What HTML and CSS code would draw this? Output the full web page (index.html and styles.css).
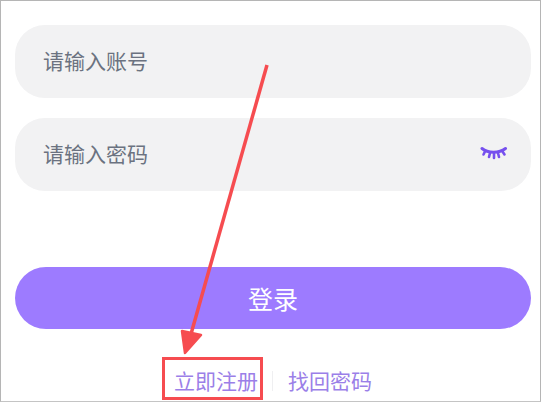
FILE: index.html
```html
<!DOCTYPE html>
<html lang="zh-CN">
<head>
  <meta charset="UTF-8">
  <meta name="viewport" content="width=device-width, initial-scale=1.0">
  <title>登录</title>
  <link rel="stylesheet" href="styles.css">
</head>
<body>
  <div class="page">
    <div class="field">请输入账号</div>
    <div class="field field-password">
      <span>请输入密码</span>
      <svg class="eye" width="28" height="14" viewBox="0 0 28 14">
        <path d="M2 2.500C8 7.500 19 7.500 25.500 2.500" fill="none" stroke="#7650ee" stroke-width="3" stroke-linecap="round"/>
        <path d="M5 5.500L3.500 8.500M10 7L9 11M14 7.500V12M18 7L19 11M22.500 5.500L24.500 8.500" fill="none" stroke="#7650ee" stroke-width="2.600" stroke-linecap="round"/>
      </svg>
    </div>
    <button class="btn-login">登录</button>
    <div class="links">
      <a class="link link-signup">立即注册</a>
      <span class="divider"></span>
      <a class="link">找回密码</a>
    </div>

    <!-- red annotation on top of the page -->
    <svg class="arrow" width="541" height="402" viewBox="0 0 541 402">
      <line x1="267" y1="65" x2="191" y2="334" stroke="#f64c50" stroke-width="3.500"/>
      <polygon points="185,353 182,331 201,335" fill="#f64c50" stroke="#f64c50" stroke-width="2.500" stroke-linejoin="round"/>
    </svg>
    <div class="mark"></div>
  </div>
</body>
</html>
```

FILE: styles.css
```css
* {
  margin: 0;
  padding: 0;
  box-sizing: border-box;
}

body {
  font-family: "Noto Sans CJK SC", "Noto Sans", sans-serif;
  background: #fff;
}

.page {
  position: relative;
  width: 541px;
  height: 402px;
  overflow: hidden;
  padding: 24px 9px 0 14px;
  border: 1px solid #b5b5b5;
  border-bottom-color: #c4c4c4;
}

/* Input rows */
.field {
  display: flex;
  align-items: center;
  justify-content: space-between;
  height: 73px;
  margin-bottom: 20px;
  padding: 0 23px 3px 28px;
  border-radius: 30px;
  background: #f2f2f3;
  color: #6b7280;
  font-size: 21px;
}

.field-password {
  margin-bottom: 76px;
}

/* Button */
.btn-login {
  display: block;
  width: 100%;
  height: 62px;
  border: none;
  border-radius: 31px;
  background: #9d7bff;
  color: #fff;
  font-family: inherit;
  font-size: 25px;
}

/* Links under the button */
.links {
  display: flex;
  align-items: center;
  margin-top: 38px;
  padding-left: 159px;
  height: 27px;
}

.link {
  color: #9b7fe8;
  font-size: 21px;
  line-height: 27px;
}

.divider {
  width: 1px;
  height: 20px;
  margin: 0 15px 0 14px;
  background: #efeff1;
}

/* Annotation */
.arrow {
  position: absolute;
  top: -1px;
  left: -1px;
}

.mark {
  position: absolute;
  top: 356px;
  left: 161px;
  width: 101px;
  height: 43px;
  border: 3px solid #f64c50;
}
```
